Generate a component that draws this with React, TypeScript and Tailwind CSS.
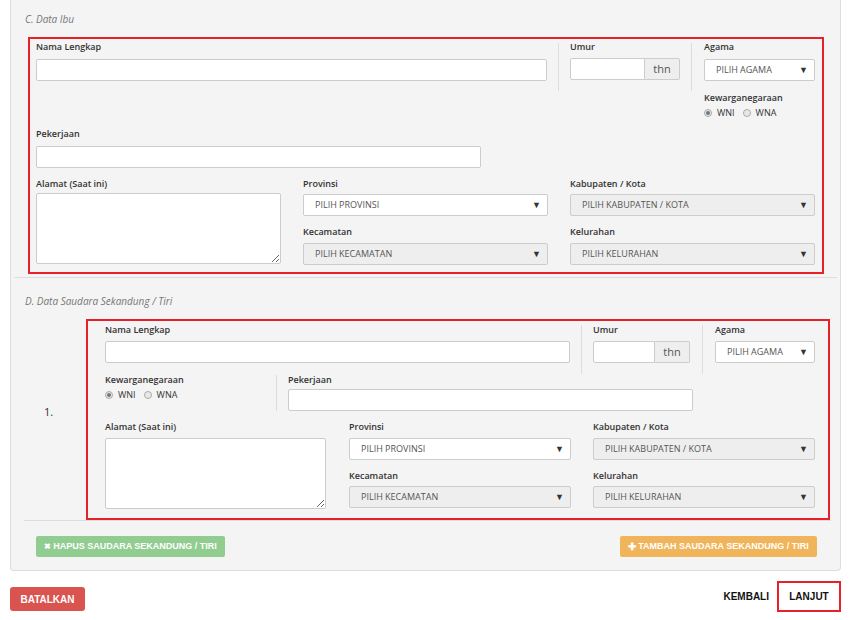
const Label = ({ children, className = "" }: { children: React.ReactNode; className?: string }) => (
  <div className={`h-[12px] text-[9px] leading-[12px] font-semibold text-[#333] ${className}`}>{children}</div>
);

const TextInput = ({ className = "" }: { className?: string }) => (
  <input type="text" className={`block h-[22px] rounded-[2px] border border-[#ccc] bg-white outline-none ${className}`} />
);

const Select = ({ text, disabled = false, className = "" }: { text: string; disabled?: boolean; className?: string }) => (
  <div
    className={`flex h-[22px] items-center justify-between rounded-[2px] border border-[#ccc] pl-[11px] pr-[6px] text-[9px] text-[#555] ${
      disabled ? "bg-[#eee]" : "bg-white"
    } ${className}`}
  >
    <span>{text}</span>
    <span className="text-[9px] text-[#333]">▼</span>
  </div>
);

const AgeInput = ({ w, addon }: { w: string; addon: string }) => (
  <div className={`mt-[5px] flex h-[22px] ${w}`}>
    <input type="text" className="h-full min-w-0 flex-1 rounded-l-[2px] border border-[#ccc] bg-white outline-none" />
    <div className={`flex h-full items-center justify-center rounded-r-[2px] border border-l-0 border-[#ccc] bg-[#eee] text-[11px] text-[#555] ${addon}`}>
      thn
    </div>
  </div>
);

const Radios = ({ className = "" }: { className?: string }) => (
  <div className={`flex h-[12px] items-center text-[9px] text-[#333] ${className}`}>
    <span className="flex h-[8px] w-[8px] items-center justify-center rounded-full border border-[#aaa] bg-[#e8e8e8]">
      <span className="h-[4px] w-[4px] rounded-full bg-[#777]" />
    </span>
    <span className="ml-[5px]">WNI</span>
    <span className="ml-[8px] h-[8px] w-[8px] rounded-full border border-[#aaa] bg-[#e8e8e8]" />
    <span className="ml-[5px]">WNA</span>
  </div>
);

const Textarea = ({ className = "" }: { className?: string }) => (
  <textarea className={`block h-[71px] resize-y rounded-[2px] border border-[#ccc] bg-white outline-none ${className}`} />
);

export default function App() {
  return (
    <div className="h-[620px] w-[852px] overflow-hidden bg-white" style={{ fontFamily: '"Open Sans", sans-serif' }}>
      <div className="ml-[10px] w-[831px] rounded-b-[4px] border-x border-b border-[#ddd] bg-[#f4f4f4] pb-[13px] pt-[12px]">
        <div className="ml-[14px] h-[14px] text-[10px] italic leading-[14px] text-[#777]">C. Data Ibu</div>

        {/* Data Ibu */}
        <div className="ml-[17px] mt-[11px] w-[796px] border-2 border-[#e8202a] px-[6px] pb-[7px]">
          <div className="flex items-start">
            <div className="w-[511px] pt-[2px]">
              <Label>Nama Lengkap</Label>
              <TextInput className="mt-[6px] w-full" />
            </div>
            <div className="ml-[11px] mt-[4px] h-[48px] w-px bg-[#ddd]" />
            <div className="ml-[11px] w-[110px] pt-[2px]">
              <Label>Umur</Label>
              <div className="mt-[1px]" />
              <AgeInput w="w-[110px]" addon="w-[35px]" />
            </div>
            <div className="ml-[11px] mt-[4px] h-[48px] w-px bg-[#ddd]" />
            <div className="ml-[12px] w-[111px] pt-[2px]">
              <Label>Agama</Label>
              <Select text="PILIH AGAMA" className="mt-[6px] h-[21px]" />
              <Label className="mt-[11px]">Kewarganegaraan</Label>
              <Radios className="mt-[3px]" />
            </div>
          </div>

          <Label className="mt-[9px]">Pekerjaan</Label>
          <TextInput className="mt-[6px] w-[445px]" />

          <div className="mt-[10px] flex gap-[22px]">
            <div className="w-[245px]">
              <Label>Alamat (Saat ini)</Label>
              <Textarea className="mt-[3px] w-full" />
            </div>
            <div className="w-[245px]">
              <Label>Provinsi</Label>
              <Select text="PILIH PROVINSI" className="mt-[4px]" />
              <Label className="mt-[10px]">Kecamatan</Label>
              <Select text="PILIH KECAMATAN" disabled className="mt-[5px]" />
            </div>
            <div className="w-[245px]">
              <Label>Kabupaten / Kota</Label>
              <Select text="PILIH KABUPATEN / KOTA" disabled className="mt-[4px]" />
              <Label className="mt-[10px]">Kelurahan</Label>
              <Select text="PILIH KELURAHAN" disabled className="mt-[5px]" />
            </div>
          </div>
        </div>

        <div className="mx-[3px] mt-[3px] h-px bg-[#ddd]" />

        <div className="ml-[14px] mt-[16px] h-[14px] text-[10px] italic leading-[14px] text-[#777]">
          D. Data Saudara Sekandung / Tiri
        </div>

        {/* Data Saudara */}
        <div className="mt-[11px] flex items-center">
          <div className="w-[75px] pb-[14px] pl-[33px] text-[11px] text-[#333]">1.</div>
          <div className="w-[744px] border-2 border-[#e8202a] pb-[9px] pl-[17px] pr-[13px]">
            <div className="flex items-start">
              <div className="w-[465px] pt-[3px]">
                <Label>Nama Lengkap</Label>
                <TextInput className="mt-[5px] w-full" />
              </div>
              <div className="ml-[11px] mt-[4px] h-[49px] w-px bg-[#ddd]" />
              <div className="ml-[11px] w-[97px] pt-[3px]">
                <Label>Umur</Label>
                <AgeInput w="w-[97px]" addon="w-[35px]" />
              </div>
              <div className="ml-[12px] mt-[4px] h-[49px] w-px bg-[#ddd]" />
              <div className="ml-[12px] w-[100px] pt-[3px]">
                <Label>Agama</Label>
                <Select text="PILIH AGAMA" className="mt-[5px]" />
              </div>
            </div>

            <div className="flex items-start">
              <div className="w-[159px]">
                <Label>Kewarganegaraan</Label>
                <Radios className="mt-[3px]" />
              </div>
              <div className="ml-[12px] mt-[1px] h-[36px] w-px bg-[#ddd]" />
              <div className="ml-[11px] w-[405px]">
                <Label>Pekerjaan</Label>
                <TextInput className="mt-[3px] w-full" />
              </div>
            </div>

            <div className="mt-[10px] flex">
              <div className="w-[221px]">
                <Label>Alamat (Saat ini)</Label>
                <Textarea className="mt-[5px] w-full" />
              </div>
              <div className="ml-[23px] w-[222px]">
                <Label>Provinsi</Label>
                <Select text="PILIH PROVINSI" className="mt-[5px]" />
                <Label className="mt-[10px]">Kecamatan</Label>
                <Select text="PILIH KECAMATAN" disabled className="mt-[4px]" />
              </div>
              <div className="ml-[22px] w-[222px]">
                <Label>Kabupaten / Kota</Label>
                <Select text="PILIH KABUPATEN / KOTA" disabled className="mt-[5px]" />
                <Label className="mt-[10px]">Kelurahan</Label>
                <Select text="PILIH KELURAHAN" disabled className="mt-[4px]" />
              </div>
            </div>
          </div>
        </div>

        <div className="ml-[13px] mr-[9px] h-px bg-[#ddd]" />

        <div
          className="ml-[25px] mr-[23px] mt-[15px] flex justify-between whitespace-nowrap text-[9px] font-bold text-white"
          style={{ fontFamily: '"Liberation Sans", Arial, sans-serif' }}
        >
          <button className="flex h-[21px] w-[189px] items-center justify-center rounded-[2px] bg-[#91cd91]">
            <span className="mr-[2px] text-[8px]">✖</span>HAPUS SAUDARA SEKANDUNG / TIRI
          </button>
          <button className="flex h-[21px] w-[197px] items-center justify-center rounded-[2px] bg-[#f0b45a]">
            <span className="mr-[2px] text-[10px]">✚</span>TAMBAH SAUDARA SEKANDUNG / TIRI
          </button>
        </div>
      </div>

      <div className="mt-[10px] flex items-center" style={{ fontFamily: '"Liberation Sans", Arial, sans-serif' }}>
        <button className="ml-[10px] mt-[5px] flex h-[24px] w-[75px] items-center justify-center rounded-[3px] bg-[#d9534f] text-[10px] font-bold text-white">
          BATALKAN
        </button>
        <div className="ml-auto mr-[8px] text-[10px] font-bold text-[#111]">KEMBALI</div>
        <div className="mr-[11px] flex h-[31px] w-[64px] items-center justify-center border-2 border-[#e8202a] text-[10px] font-bold text-[#111]">
          LANJUT
        </div>
      </div>
    </div>
  );
}
